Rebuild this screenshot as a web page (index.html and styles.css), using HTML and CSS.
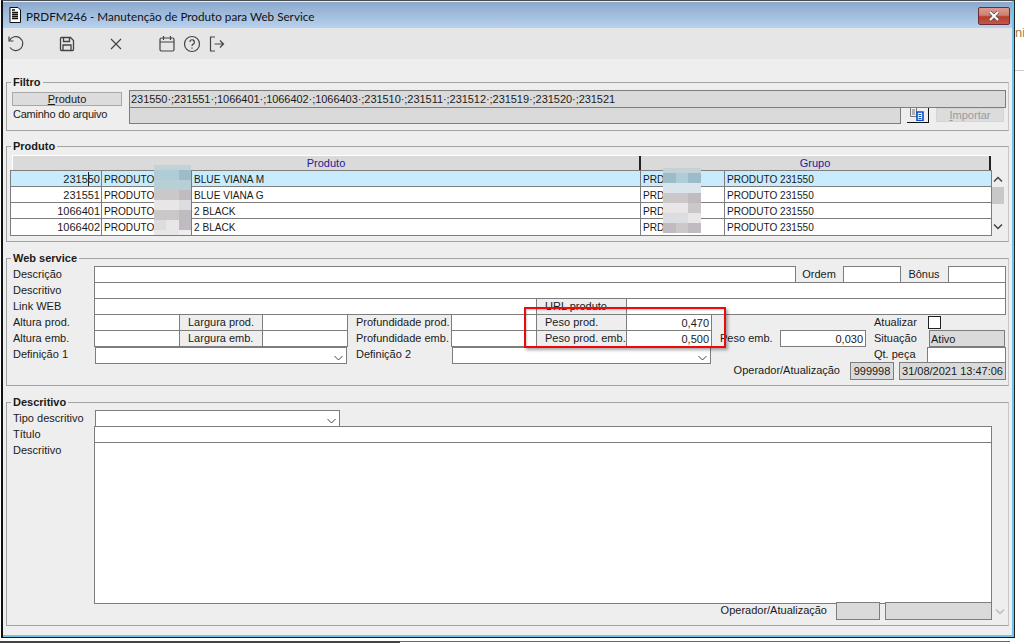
FILE: index.html
```html
<!DOCTYPE html>
<html lang="pt-BR">
<head>
<meta charset="utf-8">
<title>PRDFM246</title>
<link rel="stylesheet" href="styles.css">
</head>
<body>
<div class="side-text">ni</div>
<div class="side-rule"></div>
<main class="window">
  <header class="titlebar">
    <svg class="app-icon" width="16" height="16" viewBox="0 0 16 16"><path d="M3 .5h8l2.500 2.500v12.500H3z" fill="#fff" stroke="#111"/><path d="M5 3h3M5 5.500h6M5 7.500h6M5 9.500h6M5 11.500h6" stroke="#111" stroke-width="1.300"/></svg>
    <span class="title">PRDFM246 - Manutenção de Produto para Web Service</span>
    <button class="close" aria-label="Fechar"><svg width="16" height="10" viewBox="0 0 16 10"><path d="M4 1l8 8M12 1l-8 8" stroke="#555" stroke-width="3.600"/><path d="M4 1l8 8M12 1l-8 8" stroke="#fff" stroke-width="2"/></svg></button>
  </header>
  <nav class="toolbar">
    <svg class="tool t-undo" width="18" height="18" viewBox="0 0 18 18" fill="none" stroke="#444" stroke-width="1.200"><path d="M2.500 5.500A7 7 0 1 1 3 12.500"/><path d="M2 1.500v4.500h4.500"/></svg>
    <svg class="tool t-save" width="18" height="18" viewBox="0 0 18 18" fill="none" stroke="#444" stroke-width="1.300"><path d="M2.500 3.500a1 1 0 0 1 1-1h9l3 3v9a1 1 0 0 1-1 1h-11a1 1 0 0 1-1-1z"/><path d="M5.500 2.500v4h6v-4M5 15.500v-5.500h8v5.500"/></svg>
    <svg class="tool t-x" width="18" height="18" viewBox="0 0 18 18" fill="none" stroke="#444" stroke-width="1.200"><path d="M4 4l10 10M14 4L4 14"/></svg>
    <svg class="tool t-cal" width="18" height="18" viewBox="0 0 18 18" fill="none" stroke="#444" stroke-width="1.200"><rect x="2" y="3" width="14" height="13" rx="1.500"/><path d="M2 7h14M5.500 1v4M12.500 1v4"/></svg>
    <svg class="tool t-help" width="18" height="18" viewBox="0 0 18 18" fill="none" stroke="#444" stroke-width="1.200"><circle cx="9" cy="9" r="7.500"/><path d="M6.800 7a2.300 2.300 0 1 1 3.400 2.100c-.8.500-1.200.9-1.200 1.900"/><path d="M9 12.500v1.300"/></svg>
    <svg class="tool t-exit" width="18" height="18" viewBox="0 0 18 18" fill="none" stroke="#444" stroke-width="1.200"><path d="M7 2H2.500v14H7M6.500 9h9M12 5.500L15.500 9 12 12.500"/></svg>
  </nav>
  <div class="content">
    <section class="group g-filtro">
      <h2 class="legend">Filtro</h2>
      <div class="row filter-row">
        <button class="pick"><u>P</u>roduto</button>
        <div class="field ro f-list">231550·;231551·;1066401·;1066402·;1066403·;231510·;231511·;231512·;231519·;231520·;231521</div>
      </div>
      <div class="row filter-row">
        <span class="lbl l-path">Caminho do arquivo</span>
        <div class="field ro f-path"></div>
        <button class="browse" aria-label="Procurar"><svg width="18" height="14" viewBox="0 0 18 14"><path d="M1.500 .5h6v9h-6z" fill="#eee" stroke="#777"/><path d="M3 3h3M3 5h3M3 7h3" stroke="#777"/><path d="M8 5h6v8.500H8z" fill="#fff" stroke="#0a4fc4" stroke-width="1.600"/><path d="M9.500 7.500h3M9.500 9.500h3M9.500 11.500h3" stroke="#0a4fc4"/></svg></button>
        <button class="import" disabled><u>I</u>mportar</button>
      </div>
    </section>

    <section class="group g-produto">
      <h2 class="legend">Produto</h2>
      <div class="grid-wrap">
        <div class="thead">
          <div class="th th-a">Produto</div>
          <div class="th th-b">Grupo</div>
        </div>
        <div class="tr sel"><div class="td c1">231550</div><div class="td c2">PRODUTO</div><div class="td c3">BLUE VIANA M</div><div class="td c4">PRD</div><div class="td c5">PRODUTO 231550</div></div>
        <div class="tr"><div class="td c1">231551</div><div class="td c2">PRODUTO</div><div class="td c3">BLUE VIANA G</div><div class="td c4">PRD</div><div class="td c5">PRODUTO 231550</div></div>
        <div class="tr"><div class="td c1">1066401</div><div class="td c2">PRODUTO</div><div class="td c3">2 BLACK</div><div class="td c4">PRD</div><div class="td c5">PRODUTO 231550</div></div>
        <div class="tr tr-last"><div class="td c1">1066402</div><div class="td c2">PRODUTO</div><div class="td c3">2 BLACK</div><div class="td c4">PRD</div><div class="td c5">PRODUTO 231550</div></div>
        <div class="caret"></div>
        <div class="scroll">
          <svg width="10" height="7" viewBox="0 0 10 7" fill="none" stroke="#444" stroke-width="1.500"><path d="M1 5.500l4-4 4 4"/></svg>
          <div class="thumb"></div>
          <svg class="sc-down" width="10" height="7" viewBox="0 0 10 7" fill="none" stroke="#444" stroke-width="1.500"><path d="M1 1.500l4 4 4-4"/></svg>
        </div>
        <div class="mosaic m-a">
          <i class="p1"></i><i class="p1"></i><i class="p1"></i>
          <i class="p2"></i><i class="p2"></i><i class="p3"></i>
          <i class="p4"></i><i class="p4"></i><i class="p4"></i>
          <i class="p6"></i><i class="p6"></i><i class="p7"></i>
          <i class="p5"></i><i class="p5"></i><i class="p8"></i>
          <i class="p6"></i><i class="p6"></i><i class="p7"></i>
          <i class="p8"></i><i class="p5"></i><i class="p7"></i>
          <i class="p5"></i><i class="p5"></i><i class="p0"></i>
        </div>
        <div class="mosaic m-b">
          <i class="p1"></i><i class="p1"></i><i class="p1"></i>
          <i class="p3"></i><i class="p2"></i><i class="p3"></i>
          <i class="p9"></i><i class="p9"></i><i class="p9"></i>
          <i class="p6"></i><i class="p6"></i><i class="p7"></i>
          <i class="p5"></i><i class="p5"></i><i class="p6"></i>
          <i class="p8"></i><i class="p8"></i><i class="p5"></i>
          <i class="p7"></i><i class="p6"></i><i class="p7"></i>
        </div>
      </div>
    </section>

    <section class="group g-web">
      <h2 class="legend">Web service</h2>
      <div class="row">
        <span class="lbl l81">Descrição</span><div class="field w702"></div>
        <span class="lbl l48 ctr">Ordem</span><div class="field w58"></div>
        <span class="lbl l48 ctr">Bônus</span><div class="field w58"></div>
      </div>
      <div class="row"><span class="lbl l81">Descritivo</span><div class="field w912"></div></div>
      <div class="row"><span class="lbl l81">Link WEB</span><div class="field w443"></div><span class="cap w91">URL produto</span><div class="field w380"></div></div>
      <div class="row">
        <span class="lbl l81">Altura prod.</span><div class="field w86"></div><span class="cap w84">Largura prod.</span><div class="field w86"></div>
        <span class="lbl l95 gap9">Profundidade prod.</span><div class="field w86"></div><span class="cap w91">Peso prod.</span><div class="field w86 num">0,470</div>
        <span class="lbl l54 gap163">Atualizar</span><span class="check"></span>
      </div>
      <div class="row">
        <span class="lbl l81">Altura emb.</span><div class="field w86"></div><span class="cap w84">Largura emb.</span><div class="field w86"></div>
        <span class="lbl l95 gap9">Profundidade emb.</span><div class="field w86"></div><span class="cap w91">Peso prod. emb.</span><div class="field w86 num">0,500</div>
        <span class="lbl l60 gap9">Peso emb.</span><div class="field w86 num">0,030</div>
        <span class="lbl l55 gap9">Situação</span><div class="field ro w76 ativo">Ativo</div>
      </div>
      <div class="row">
        <span class="lbl l82">Definição 1</span>
        <div class="combo low w252"><svg width="9" height="6" viewBox="0 0 9 6" fill="none" stroke="#444"><path d="M.5 1l4 4 4-4"/></svg></div>
        <span class="lbl l96 gap9">Definição 2</span>
        <div class="combo low w259"><svg width="9" height="6" viewBox="0 0 9 6" fill="none" stroke="#444"><path d="M.5 1l4 4 4-4"/></svg></div>
        <span class="lbl l53 gap163">Qt. peça</span><div class="field low w79"></div>
      </div>
      <div class="row row-end">
        <span class="lbl">Operador/Atualização</span><div class="field ro w44 r-op ctr">999998</div><div class="field ro w107 r-date ctr">31/08/2021 13:47:06</div>
      </div>
    </section>

    <section class="group g-desc">
      <h2 class="legend">Descritivo</h2>
      <div class="row">
        <span class="lbl l82">Tipo descritivo</span>
        <div class="combo w245"><svg width="9" height="6" viewBox="0 0 9 6" fill="none" stroke="#444"><path d="M.5 1l4 4 4-4"/></svg></div>
      </div>
      <div class="row"><span class="lbl l81">Título</span><div class="field w898"></div></div>
      <div class="row area-row"><span class="lbl l81">Descritivo</span><div class="field w898 area"></div></div>
      <div class="row row-foot">
        <span class="lbl">Operador/Atualização</span><div class="field ro w44 f-op"></div><div class="field ro w107 f-date"></div>
        <svg class="dis-arrow" width="10" height="7" viewBox="0 0 10 7" fill="none" stroke="#bbb" stroke-width="1.500"><path d="M1 1.500l4 4 4-4"/></svg>
      </div>
    </section>
  </div>
  <div class="highlight"></div>
</main>
<div class="back-line"></div>
</body>
</html>
```
FILE: styles.css
```css
* { box-sizing: border-box; }
html, body { margin: 0; padding: 0; }
body {
  position: relative;
  width: 1024px;
  height: 643px;
  overflow: hidden;
  background: #fff;
  font: 11px/14px "Liberation Sans", Arial, sans-serif;
  color: #1a1a1a;
}
.side-text { position: absolute; left: 1015px; top: 26px; font-size: 13px; color: #a87a3a; }
.side-rule { position: absolute; left: 1015px; top: 70px; width: 9px; height: 1px; background: #ccc; }

.window {
  position: relative;
  margin-left: 1px;
  width: 1014px;
  height: 638px;
  background: #eee;
  border-top: 1px solid #4c4c4c;
  border-left: 2px solid #111;
  border-right: 1px solid #222;
  border-bottom: 1px solid #111;
  box-shadow: inset -2px -2px 0 #6fc3e8;
  display: flex;
  flex-direction: column;
}
.titlebar {
  height: 26px;
  margin-top: 1px;
  margin-right: 2px;
  flex: none;
  display: flex;
  align-items: center;
  padding-left: 4px;
  background: linear-gradient(#8ba8cd, #b8d2ee);
  font: 11.700px Lato, sans-serif;
  color: #111;
}
.app-icon { margin-right: 3px; }
.title { padding-top: 2px; }
.close {
  margin-left: auto;
  margin-right: 2px;
  margin-top: 2px;
  width: 32px;
  height: 18px;
  padding: 0;
  display: flex;
  align-items: center;
  justify-content: center;
  border: 1px solid #6e2c32;
  border-radius: 2px;
  background: linear-gradient(#dc9a90 0, #d08074 45%, #b83c28 55%, #c05a48 100%);
}
.toolbar {
  height: 31px;
  flex: none;
  margin-right: 2px;
  background: #e6e6e6;
  display: flex;
  align-items: center;
}
.tool { flex: none; }
.t-undo { margin-left: 4px; }
.t-save { margin-left: 33px; }
.t-x { margin-left: 31px; }
.t-cal { margin-left: 33px; }
.t-help { margin-left: 7px; }
.t-exit { margin-left: 7px; }

.content { flex: 1; padding: 23px 0 0 3px; margin-right: 2px; }

.group {
  position: relative;
  width: 1003px;
  border: 1px solid #a3a3a3;
  border-right-color: #c8c8c8;
  padding-left: 6px;
}
.legend {
  position: absolute;
  top: -8px;
  left: 4px;
  margin: 0;
  padding: 0 2px;
  background: #eee;
  font: bold 11px/14px "Liberation Sans", sans-serif;
  color: #1a1a1a;
}
.g-filtro { height: 49px; padding-top: 7px; margin-bottom: 15px; }
.g-produto { height: 96px; padding-top: 8px; margin-bottom: 16px; padding-left: 3px; }
.g-web { height: 128px; padding-top: 7px; margin-bottom: 16px; }
.g-desc { height: 224px; padding-top: 7px; }

.row { display: flex; height: 16px; align-items: flex-start; white-space: nowrap; }
.lbl { flex: none; line-height: 17px; }
.field {
  flex: none;
  position: relative;
  z-index: 1;
  height: 17px;
  background: #fff;
  border: 1px solid #7d7d7d;
  margin-right: -1px;
  line-height: 16px;
  padding: 0 2px;
  overflow: hidden;
}
.field.ro { background: #dadada; }
.num { text-align: right; padding-right: 2px; }
.ctr { text-align: center; }
.cap {
  flex: none;
  height: 17px;
  background: #eee;
  border-top: 1px solid #7d7d7d;
  border-bottom: 1px solid #7d7d7d;
  padding-left: 9px;
  line-height: 14px;
  margin-right: -1px;
}
.combo {
  flex: none;
  position: relative;
  height: 17px;
  background: #fff;
  border: 1px solid #7d7d7d;
  display: flex;
  align-items: center;
  justify-content: flex-end;
  padding: 5px 3px 0 0;
}
.low { margin-top: 1px; }

/* filtro */
.filter-row { height: 17px; }
.filter-row + .filter-row { height: 17px; margin-top: -1px; }
.pick {
  width: 110px;
  height: 14px;
  margin: 2px 7px 0 -1px;
  padding: 0;
  flex: none;
  background: #dcdcdc;
  border: 1px solid #a8a8a8;
  font: inherit;
  line-height: 11px;
  color: #1a1a1a;
}
.f-list { width: 877px; height: 18px; margin-right: 0; padding-left: 1px; letter-spacing: -.05px; }
.l-path { width: 116px; letter-spacing: -.24px; }
.f-path { width: 772px; margin-top: 1px; }
.browse {
  width: 22px;
  height: 16px;
  margin: 1px 0 0 7px;
  padding: 0;
  flex: none;
  display: flex;
  align-items: flex-start;
  justify-content: center;
  background: #eee;
  border: 0;
  border-right: 1px solid #111;
  border-bottom: 1px solid #111;
}
.import {
  width: 68px;
  height: 14px;
  margin: 2px 0 0 7px;
  padding: 0;
  flex: none;
  background: #dcdcdc;
  border: 1px solid #d4d4d4;
  font: inherit;
  line-height: 12px;
  color: #9a9a9a;
}

/* produto */
.grid-wrap { position: relative; width: 994px; }
.thead {
  display: flex;
  width: 979px;
  margin-left: 2px;
  height: 16px;
  background: #dadada;
  border-top: 1px solid #fff;
  border-bottom: 1px solid #7d7d7d;
  border-left: 1px solid #fff;
  color: #1a1a9c;
  text-align: center;
  line-height: 15px;
}
.th { flex: none; border-right: 2px solid #222; }
.th-a { width: 628px; }
.th-b { width: 350px; }
.tr { display: flex; width: 982px; height: 16px; background: #fff; border-bottom: 1px solid #7d7d7d; border-left: 1px solid #7d7d7d; border-right: 1px solid #7d7d7d; }
.tr-last { height: 17px; }
.tr.sel { background: #c8ecfd; box-shadow: 0 -1px 0 #7d7d7d; }
.td { flex: none; font-size: 10.100px; line-height: 13px; padding: 2px 0 0 2px; border-right: 1px solid #7d7d7d; overflow: hidden; }
.td:last-child { border-right: 0; }
.c1 { width: 91px; font-size: 11px; text-align: right; padding-right: 1px; }
.c2 { width: 90px; }
.c3 { width: 449px; }
.c4 { width: 84px; }
.c5 { width: 266px; }
.caret { position: absolute; left: 78px; top: 17px; width: 1px; height: 14px; background: #222; }
.scroll {
  position: absolute;
  left: 982px;
  top: 16px;
  width: 12px;
  height: 65px;
  display: flex;
  flex-direction: column;
  align-items: center;
  padding-top: 5px;
}
.scroll svg { flex: none; }
.thumb { width: 12px; height: 17px; margin-top: 4px; background: #c8c8c8; flex: none; }
.sc-down { margin-top: 19px; }
.mosaic {
  position: absolute;
  display: grid;
  grid-template-columns: repeat(3, 1fr);
}
.m-a { left: 144px; top: 10px; width: 37px; height: 70px; grid-template-rows: 5fr repeat(6, 10fr) 5fr; }
.m-b { left: 653px; top: 13px; width: 38px; height: 65px; grid-template-rows: 5fr repeat(6, 10fr); }
.mosaic i { display: block; }
.p0 { background: #eeeeee; }
.p1 { background: #c4d2d6; }
.p2 { background: #b0ccd6; }
.p3 { background: #9dbcc9; }
.p4 { background: #b8cfd6; }
.p5 { background: #e8e6e6; }
.p6 { background: #ccc8ca; }
.p7 { background: #bfbbc0; }
.p8 { background: #dcdde1; }
.p9 { background: #d9e5ea; }

/* largura */
.l81 { width: 81px; }
.l82 { width: 82px; }
.l48 { width: 48px; }
.l95 { width: 95px; }
.l96 { width: 96px; }
.l60 { width: 60px; }
.l55 { width: 55px; }
.l54 { width: 54px; }
.l53 { width: 53px; }
.gap9 { margin-left: 9px; }
.gap163 { margin-left: 163px; }
.w702 { width: 702px; }
.w58 { width: 58px; }
.w912 { width: 912px; }
.w443 { width: 443px; }
.w380 { width: 380px; }
.w91 { width: 91px; }
.w86 { width: 86px; }
.w84 { width: 84px; }
.w76 { width: 76px; }
.w252 { width: 252px; }
.w259 { width: 259px; }
.w79 { width: 79px; }
.w44 { width: 44px; }
.w107 { width: 107px; }
.w245 { width: 245px; }
.w898 { width: 898px; }
.check { flex: none; width: 13px; height: 13px; margin-top: 2px; background: #fff; border: 1px solid #222; }
.ativo { padding-left: 1px; }
.row-end { justify-content: flex-end; height: 18px; padding-right: 2px; }
.row-end .lbl { margin-right: 10px; }
.row-end .field { height: 18px; line-height: 17px; }
.r-op { margin-right: 5px; padding: 0; }
.r-date { margin-right: 0; padding: 0; }
.area-row { height: 162px; }
.area { height: 162px; }
.row-foot { justify-content: flex-end; padding-right: 16px; height: 18px; margin-top: -2px; position: relative; }
.row-foot .lbl { margin-right: 9px; padding-top: 1px; line-height: 15px; }
.row-foot .field { height: 18px; }
.f-op { margin-right: 5px; }
.f-date { margin-right: 0; }
.dis-arrow { position: absolute; right: 3px; top: 6px; }

.highlight {
  position: absolute;
  left: 521px;
  top: 306px;
  width: 202px;
  height: 41px;
  z-index: 2;
  border: 2px solid #ee0a0a;
  box-shadow: 2px 2px 3px rgba(0,0,0,.35), inset 1px 1px 2px rgba(0,0,0,.2);
}
.back-line {
  height: 2px;
  margin-top: 3px;
  width: 1010px;
  background:
    linear-gradient(#444, #444) 0 0 / 400px 2px no-repeat,
    linear-gradient(#666, #666) 0 0 / 1010px 1px no-repeat;
}
```
